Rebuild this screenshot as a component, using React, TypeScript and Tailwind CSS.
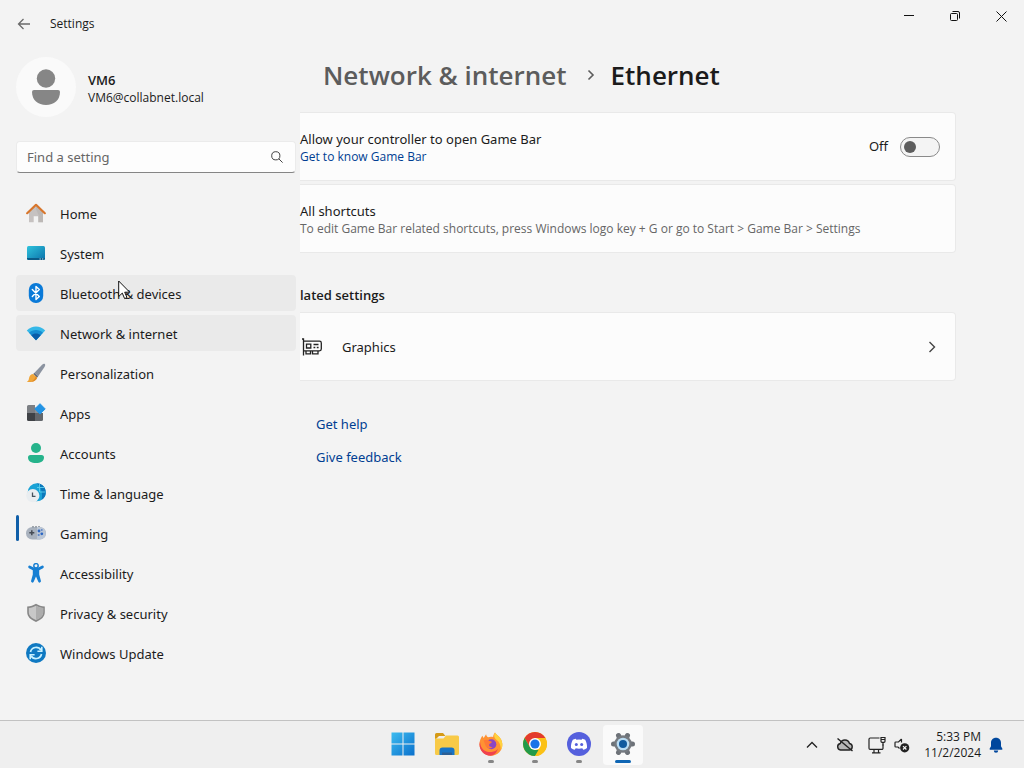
import React, { useState } from 'react';
import { clsx } from 'clsx';

interface NavItem {
  id: string;
  label: string;
  icon: React.ReactNode;
}

/* ── Sidebar icons ── */
const HomeIcon = () => (
  <svg viewBox="0 0 20 20" className="w-5 h-5">
    <path d="M3 9 10 2.5 17 9v10.2h-4.7v-6H7.7v6H3z" fill="#c6c2c1" />
    <path d="M13 13h-.7v6.2H17V9l-7-6.5V6z" fill="#b2adac" opacity=".5" />
    <path d="M1.2 10.2 10 1.8l8.8 8.4" fill="none" stroke="#d8762c" strokeWidth="2.2" strokeLinecap="round" strokeLinejoin="round" />
  </svg>
);

const SystemIcon = () => (
  <svg viewBox="0 0 20 20" className="w-5 h-5">
    <defs>
      <linearGradient id="sys" x1="0" y1="0" x2="1" y2="1">
        <stop offset="0" stopColor="#2fc3dc" />
        <stop offset="1" stopColor="#0b72ab" />
      </linearGradient>
    </defs>
    <rect x="1" y="3" width="18" height="14" rx="1.5" fill="url(#sys)" />
    <path d="M1 15h18v.6a1.4 1.4 0 0 1-1.4 1.4H2.4A1.4 1.4 0 0 1 1 15.6z" fill="#0b5b88" />
    <path d="M13.5 16h1.3M16 16h1.3" stroke="#d9f2fa" strokeWidth=".9" />
  </svg>
);

const BluetoothIcon = () => (
  <svg viewBox="0 0 20 20" className="w-5 h-5">
    <rect x="2.8" y="0" width="14.4" height="20" rx="7" fill="#0a7ad8" />
    <path d="m6.3 6.5 7 7-3.300 3.100V3.400l3.300 3.100-7 7" fill="none" stroke="#fff" strokeWidth="1.4" strokeLinejoin="round" strokeLinecap="round" />
  </svg>
);

const NetworkIcon = () => (
  <svg viewBox="0 0 20 20" className="w-5 h-5">
    <path d="M10 17.2.8 7.4C6 2.2 14 2.2 19.2 7.4z" fill="#35b8e8" />
    <path d="M10 17.2 3 9.8c3.900-3.700 10.100-3.700 14 0z" fill="#168cd2" />
    <path d="m10 17.200-4.700-4.900c2.700-2.400 6.700-2.400 9.400 0z" fill="#0a5ca8" />
  </svg>
);

const BrushIcon = () => (
  <svg viewBox="0 0 20 20" className="w-5 h-5">
    <path d="M18.8 1c.7.7.4 1.800-.3 2.900l-6.300 9.400-3.700-3.500 7.600-8C17 .9 18.100.4 18.800 1z" fill="#8b93a0" />
    <path d="m8.500 9.800 3.700 3.500-1.200 1.400L7.200 11z" fill="#6a6f79" />
    <path d="M7.200 11 11 14.700c-.6 3.100-4.800 4.700-10.200 4.200 2-.9 1.900-2.200 2.300-4.100C3.600 12.500 5.200 11 7.200 11z" fill="#f0a63a" />
    <path d="M1 18.900c4 .2 6-.9 7.300-2.700 1-1.400 1.200-2.400 1.100-3.300l1.600 1.800c-.6 3.100-4.800 4.700-10 4.200z" fill="#df8a26" />
  </svg>
);

const AppsIcon = () => (
  <svg viewBox="0 0 20 20" className="w-5 h-5">
    <path d="M1 3.5A1.5 1.5 0 0 1 2.5 2H9v8H1z" fill="#7c7f84" />
    <path d="M1 10h8v8H2.5A1.5 1.5 0 0 1 1 16.5z" fill="#3f4246" />
    <path d="M9 10h8v6.5a1.5 1.5 0 0 1-1.5 1.5H9z" fill="#63676c" />
    <path d="M9 4.5h5V10H9z" fill="#8d9196" />
    <path d="m14 .7 5.2 5.2-5.200 5.200-5.200-5.200z" fill="#2293e4" stroke="#2293e4" strokeLinejoin="round" />
  </svg>
);

const AccountsIcon = () => (
  <svg viewBox="0 0 20 20" className="w-5 h-5">
    <circle cx="10" cy="5" r="5" fill="#25b38b" />
    <path d="M4.5 12h11a2.500 2.500 0 0 1 2.500 2.500C18 18.300 14.500 20 10 20s-8-1.700-8-5.500A2.500 2.500 0 0 1 4.500 12z" fill="#25b38b" />
  </svg>
);

const TimeIcon = () => (
  <svg viewBox="0 0 20 20" className="w-5 h-5">
    <circle cx="10.7" cy="9.3" r="9" fill="#1aa3d6" />
    <path d="M10.7.3a9 9 0 0 1 4.7 16.700c1.500-4.300.8-12-4.700-16.700z" fill="#0c78bb" />
    <path d="M11 4.5h7.2M14 9h5.500M13.500 1v8" stroke="#5fd0ee" strokeWidth=".9" fill="none" />
    <circle cx="6.8" cy="12.7" r="6.6" fill="#e9edf0" />
    <path d="M6.5 9.5v3.800h3" stroke="#46525c" strokeWidth="1.3" fill="none" />
  </svg>
);

const GamingIcon = () => (
  <svg viewBox="0 0 20 20" className="w-5 h-5">
    <rect x="0" y="4" width="20" height="12.5" rx="6.25" fill="#a9b2be" />
    <path d="M6 3.800h2M9 3.800h2M12 3.800h2" stroke="#7b838e" strokeWidth="1" />
    <path d="M5.800 7.200v5M3.300 9.700h5" stroke="#454b54" strokeWidth="1.5" />
    <path d="M11 4h2.500a6.250 6.250 0 0 1 0 12.500H11z" fill="#bcc7d6" />
    <circle cx="13" cy="8" r="1.4" fill="#2b66c4" />
    <circle cx="15.8" cy="10.8" r="1.4" fill="#2b66c4" />
    <circle cx="12.7" cy="12" r="1.1" fill="#5c83c5" />
    <circle cx="15.8" cy="7" r=".9" fill="#5c83c5" />
  </svg>
);

const AccessibilityIcon = () => (
  <svg viewBox="0 0 20 20" className="w-5 h-5">
    <path d="M3.600 4 8 6.200h4L16.400 4" fill="none" stroke="#177fd3" strokeWidth="2.8" strokeLinecap="round" strokeLinejoin="round" />
    <path d="M6.800 6h6.400v5.500l1.700 6.300a1.400 1.400 0 0 1-2.700.8L10 13.500l-2.200 5.100a1.400 1.400 0 0 1-2.700-.8l1.700-6.300z" fill="#177fd3" />
    <circle cx="10" cy="2.8" r="2.2" fill="#f3f3f3" stroke="#177fd3" strokeWidth="1.5" />
  </svg>
);

const ShieldIcon = () => (
  <svg viewBox="0 0 20 20" className="w-5 h-5">
    <path d="M10 .8c2.500 1.700 5.500 2.500 8.800 2.700V9c0 4.700-3.200 7.700-8.800 9.900C4.400 16.700 1.200 13.700 1.200 9V3.500C4.500 3.300 7.500 2.500 10 .8z" fill="#878787" />
    <path d="M10 2.700c2.200 1.300 4.500 2 7.200 2.200v4.300c0 3.700-2.800 6-7.200 7.700-4.400-1.700-7.200-4-7.200-7.700V4.900C5.500 4.700 7.800 4 10 2.700z" fill="#c8c8c8" />
    <path d="M10 2.700c2.200 1.300 4.500 2 7.200 2.200v4.300c0 3.700-2.800 6-7.200 7.700z" fill="#adadad" />
  </svg>
);

const UpdateIcon = () => (
  <svg viewBox="0 0 20 20" className="w-5 h-5">
    <circle cx="10" cy="10" r="10" fill="#0f79c2" />
    <path d="M4.500 9A5.700 5.700 0 0 1 15 7.200M15.500 11A5.700 5.700 0 0 1 5 12.800" fill="none" stroke="#c8f1ff" strokeWidth="1.7" />
    <path d="M15.800 3.800v4.400h-4.400M4.200 16.200v-4.400h4.400" fill="none" stroke="#c8f1ff" strokeWidth="1.6" />
  </svg>
);

const navItems: NavItem[] = [
  { id: 'home', label: 'Home', icon: <HomeIcon /> },
  { id: 'system', label: 'System', icon: <SystemIcon /> },
  { id: 'bluetooth', label: 'Bluetooth & devices', icon: <BluetoothIcon /> },
  { id: 'network', label: 'Network & internet', icon: <NetworkIcon /> },
  { id: 'personalization', label: 'Personalization', icon: <BrushIcon /> },
  { id: 'apps', label: 'Apps', icon: <AppsIcon /> },
  { id: 'accounts', label: 'Accounts', icon: <AccountsIcon /> },
  { id: 'time', label: 'Time & language', icon: <TimeIcon /> },
  { id: 'gaming', label: 'Gaming', icon: <GamingIcon /> },
  { id: 'accessibility', label: 'Accessibility', icon: <AccessibilityIcon /> },
  { id: 'privacy', label: 'Privacy & security', icon: <ShieldIcon /> },
  { id: 'update', label: 'Windows Update', icon: <UpdateIcon /> },
];

/* ── Title bar ── */
const TitleBar: React.FC = () => (
  <header className="flex h-12 items-center justify-between">
    <div className="flex items-center gap-[18px] pl-4">
      <button aria-label="Back" className="flex h-8 w-4 items-center justify-center text-[#6b6b6b]">
        <svg viewBox="0 0 14 12" className="h-3 w-3.5" fill="none" stroke="currentColor" strokeWidth="1.3">
          <path d="M13 6H1.500M6.500 1l-5 5 5 5" />
        </svg>
      </button>
      <span className="font-['Open_Sans',sans-serif] text-xs">Settings</span>
    </div>
    <div className="flex self-start">
      <button aria-label="Minimize" className="flex h-8 w-[46px] items-center justify-center">
        <svg viewBox="0 0 10 10" className="h-2.5 w-2.5"><path d="M0 4.500h10" stroke="#111" /></svg>
      </button>
      <button aria-label="Restore" className="flex h-8 w-[46px] items-center justify-center">
        <svg viewBox="0 0 10 10" className="h-2.5 w-2.5" fill="none" stroke="#111">
          <rect x=".5" y="2.5" width="7" height="7" rx="1" />
          <path d="M2.500.5H8A1.500 1.500 0 0 1 9.500 2v5.500" />
        </svg>
      </button>
      <button aria-label="Close" className="flex h-8 w-[46px] items-center justify-center">
        <svg viewBox="0 0 11 11" className="h-[11px] w-[11px]"><path d="m.5.5 10 10m0-10-10 10" stroke="#111" /></svg>
      </button>
    </div>
  </header>
);

/* ── Sidebar ── */
const Sidebar: React.FC = () => {
  const [current, setCurrent] = useState('gaming');

  return (
    <aside className="w-[296px] shrink-0 pl-4 pt-[9px]">
      <div className="flex items-center gap-3">
        <div className="flex h-[60px] w-[60px] items-center justify-center rounded-full bg-[#fafafa]">
          <svg viewBox="0 0 28 36" className="h-9 w-7" fill="#868686">
            <circle cx="14" cy="9.5" r="9.2" />
            <path d="M2 21h24a2 2 0 0 1 2 2c0 8-6 13-14 13S0 31 0 23a2 2 0 0 1 2-2z" />
          </svg>
        </div>
        <div className="pt-1 font-['Open_Sans',sans-serif] leading-[18px]">
          <p className="text-[13px] font-semibold leading-[18px]">VM6</p>
          <p className="text-xs leading-[18px]">VM6@collabnet.local</p>
        </div>
      </div>

      <label className="mt-6 flex h-8 items-center rounded border border-b-[#858585] border-[#ebebeb] bg-[#fdfdfd] pl-2.5 pr-3">
        <input
          type="text"
          aria-label="Find a setting"
          placeholder="Find a setting"
          className="min-w-0 flex-1 bg-transparent pt-0.5 text-[13px] outline-none placeholder:text-[#666]"
        />
        <svg viewBox="0 0 12 12" className="h-3 w-3" fill="none" stroke="#444" strokeWidth="1">
          <circle cx="4.8" cy="4.8" r="4.1" />
          <path d="m7.800 7.800 3.800 3.800" />
        </svg>
      </label>

      <nav className="mt-[22px] flex flex-col gap-1">
        {navItems.map((item) => {
          const highlighted = item.id === 'bluetooth' || item.id === 'network';
          return (
            <button
              key={item.id}
              onClick={() => setCurrent(item.id)}
              className={clsx(
                'relative flex h-9 items-center gap-3.5 rounded pl-2.5 text-left text-[13px] hover:bg-[#eaeaea]',
                highlighted && 'bg-[#eaeaea]',
              )}
            >
              {/* Accent pill */}
              {current === item.id && (
                <span className="absolute left-0 top-0 h-[26px] w-[3px] rounded-full bg-[#0f5ea8]" />
              )}
              {item.icon}
              <span className="pt-1">{item.label}</span>
            </button>
          );
        })}
      </nav>
    </aside>
  );
};

/* ── Page content ── */
const Content: React.FC = () => {
  const [enabled, setEnabled] = useState(false);
  const card = 'flex h-[69px] items-center rounded-r border border-l-0 border-[#e9e9e9] bg-[#fcfcfc]';

  return (
    <main className="ml-1 min-w-0 flex-1 pr-[68px] pt-2">
      <h1 className="flex items-center pl-[23px] font-['Open_Sans',sans-serif] text-[26px] font-semibold leading-[38px]">
        <a href="#network" className="text-[#5c5c5c]">Network &amp; internet</a>
        <svg viewBox="0 0 8 12" className="ml-5 mr-4 h-3 w-2" fill="none" stroke="#5c5c5c" strokeWidth="1.6">
          <path d="m1.500 1.500 4.500 4.500-4.500 4.500" />
        </svg>
        <span>Ethernet</span>
      </h1>

      <div className="mt-[18px] flex flex-col gap-[3px]">
        <section className={clsx(card, 'justify-between pr-[15px]')}>
          <div className="pt-0.5">
            <p className="text-[13px] leading-[18px]">
              <label htmlFor="game-bar">Allow your controller to open Game Bar</label>
            </p>
            <a href="#game-bar" className="block font-['Open_Sans',sans-serif] text-xs leading-[18px] text-[#003e92]">
              Get to know Game Bar
            </a>
          </div>
          <div className="flex items-center gap-3">
            <span className="text-[13px]">{enabled ? 'On' : 'Off'}</span>
            <input
              id="game-bar"
              type="checkbox"
              role="switch"
              checked={enabled}
              onChange={(e) => setEnabled(e.target.checked)}
              className="flex h-5 w-10 appearance-none items-center rounded-full border border-[#8a8a8a] bg-[#f4f4f4] px-[3px] before:h-3 before:w-3 before:rounded-full before:bg-[#5d5d5d] checked:justify-end checked:bg-[#005fb8] checked:before:bg-white"
            />
          </div>
        </section>

        <section className={card}>
          <div className="pt-0.5">
            <p className="text-[13px] leading-[18px]">All shortcuts</p>
            <p className="font-['Open_Sans',sans-serif] text-xs leading-[18px] text-[#666]">
              To edit Game Bar related shortcuts, press Windows logo key + G or go to Start &gt; Game Bar &gt; Settings
            </p>
          </div>
        </section>
      </div>

      <h2 className="mt-8 font-['Open_Sans',sans-serif] text-[13px] font-semibold leading-5">lated settings</h2>
      <button className={clsx(card, 'mt-[7px] w-full pr-[15px] text-left')}>
        <svg viewBox="0 0 20 18" className="ml-0.5 h-[18px] w-5" fill="none" stroke="#222" strokeWidth="1.3">
          <path d="M0 1h1.500v16.500M1.500 3.200h16a1.800 1.800 0 0 1 1.800 1.800v6a1.800 1.800 0 0 1-1.800 1.800h-16" />
          <path d="M4.500 6.200h4.300v3.800H4.500zM11.500 6.500h5M11.500 9.500h1.800M14.800 9.500h1.800M4 13v2.800h4.500V13M10.500 13v2.800h5.500V13" />
        </svg>
        <span className="ml-5 flex-1 pt-0.5 text-[13px]">Graphics</span>
        <svg viewBox="0 0 8 12" className="mr-1 h-3 w-2" fill="none" stroke="#444" strokeWidth="1.4">
          <path d="m1.500 1 5 5-5 5" />
        </svg>
      </button>

      <div className="mt-[33px] flex flex-col items-start gap-[13px] pl-4 text-[13px] leading-5 text-[#003e92]">
        <a href="#help">Get help</a>
        <a href="#feedback">Give feedback</a>
      </div>
    </main>
  );
};

/* ── Taskbar icons ── */
const StartIcon = () => (
  <svg viewBox="0 0 24 24" className="h-6 w-6">
    <defs>
      <linearGradient id="win" x1="0" y1="0" x2="1" y2="1">
        <stop offset="0" stopColor="#3cbcf0" />
        <stop offset="1" stopColor="#0a70cc" />
      </linearGradient>
    </defs>
    <path d="M.5.5h11v11H.5zM12.500.5h11v11h-11zM.5 12.500h11v11H.5zM12.500 12.500h11v11h-11z" fill="url(#win)" />
  </svg>
);

const FolderIcon = () => (
  <svg viewBox="0 0 26 24" className="h-6 w-[26px]">
    <path d="M1 2.500A1.500 1.500 0 0 1 2.500 1H9l2.500 3H5L1 8z" fill="#d59a17" />
    <path d="M1 6.500h8.500l2.500-3h11.500A1.500 1.500 0 0 1 25 5v16.500a1.500 1.500 0 0 1-1.500 1.500h-21A1.500 1.500 0 0 1 1 21.500z" fill="#f8ca47" />
    <path d="M5.500 23v-4.500a3 3 0 0 1 3-3h9a3 3 0 0 1 3 3V23z" fill="#1874c5" />
    <path d="M8 20.500h10V23H8z" fill="#2c5f94" />
  </svg>
);

const FirefoxIcon = () => (
  <svg viewBox="0 0 24 24" className="h-6 w-6">
    <path d="M16 .5c1.200 2.600 6.800 4.500 7.300 11.300C23.800 18.700 18.600 23.700 12 23.700S.5 18.700.5 12.300C.5 9 1.600 6.200 3.300 3.700L4.700 6l2.400-3.700c.2 1.500.9 2.300 2 2.900 1.800-.7 3.500-.7 5-.2.3-2 .8-3.400 1.900-4.500z" fill="#ff9233" />
    <path d="M16 .5c1.200 2.600 6.800 4.500 7.300 11.300.2 2.500-.4 4.700-1.500 6.500.2-5-1.300-8.500-4.500-10.600C15 6.200 14.500 3 16 .5z" fill="#ffd23d" />
    <path d="M1 9.500C1.500 18 7 20.500 12.500 20c3-.3 5-1.500 6.300-3.200-1 4.200-4 6.900-7.300 6.900C5 23.700.5 18.500.5 12.300z" fill="#f0424f" />
    <circle cx="12.3" cy="12.3" r="5" fill="#8b45c4" />
    <path d="M4.500 8.500c2.300-1.200 4.300-.8 6 .5 1.800.1 2.500.6 2.300 1.300-.9 1.100-2.500 1.100-2.700 2.400-.2 1.600 1.400 2.600 3.500 2.200-2.200 2.200-6.500 1.400-7.300-1.900C5.600 11 5.300 10 4.500 8.500z" fill="#ff7a35" />
  </svg>
);

const ChromeIcon = () => (
  <svg viewBox="0 0 24 24" className="h-6 w-6">
    <circle cx="12" cy="12" r="12" fill="#fbc116" />
    <path d="M1.610 6A12 12 0 0 1 22.390 6H12L6.800 15z" fill="#e33b2e" />
    <path d="M1.610 6 6.800 15 12 18h5.200L12 24A12 12 0 0 1 1.610 6z" fill="#229a4a" />
    <path d="M22.390 6A12 12 0 0 1 12 24l5.200-9V6z" fill="#fbc116" />
    <circle cx="12" cy="12" r="6" fill="#fff" />
    <circle cx="12" cy="12" r="4.6" fill="#1a73e8" />
  </svg>
);

const DiscordIcon = () => (
  <svg viewBox="0 0 24 24" className="h-6 w-6">
    <circle cx="12" cy="12" r="12" fill="#5560dd" />
    <path d="M8.800 6.700c-1.300.2-2.300.6-3 1-1.400 2.500-2 5.300-1.800 8.300 1.300 1 2.600 1.500 3.800 1.700l.9-1.500c2.200.6 4.400.6 6.600 0l.9 1.500c1.200-.2 2.500-.7 3.800-1.700.2-3-.4-5.800-1.800-8.300-.7-.4-1.700-.8-3-1l-.6 1.100a12 12 0 0 0-5.200 0z" fill="#fff" />
    <circle cx="9.3" cy="12.6" r="1.5" fill="#5560dd" />
    <circle cx="14.7" cy="12.6" r="1.5" fill="#5560dd" />
  </svg>
);

const GearIcon = () => (
  <svg viewBox="0 0 24 24" className="h-6 w-6">
    <path
      d="M7.500 3.500 16.500 20.500M16.500 3.500 7.500 20.500M2.500 12h19"
      stroke="#6d7278"
      strokeWidth="5"
      strokeLinecap="round"
    />
    <circle cx="12" cy="12" r="8.7" fill="#757a80" />
    <circle cx="12" cy="12" r="6.3" fill="#b9dcf3" />
    <circle cx="12" cy="12" r="4" fill="#115a9e" />
  </svg>
);

interface TaskbarApp {
  label: string;
  icon: React.ReactNode;
  running?: boolean;
  active?: boolean;
}

const taskbarApps: TaskbarApp[] = [
  { label: 'Start', icon: <StartIcon /> },
  { label: 'File Explorer', icon: <FolderIcon /> },
  { label: 'Firefox', icon: <FirefoxIcon />, running: true },
  { label: 'Chrome', icon: <ChromeIcon />, running: true },
  { label: 'Discord', icon: <DiscordIcon />, running: true },
  { label: 'Settings', icon: <GearIcon />, active: true },
];

const Taskbar: React.FC = () => (
  <footer className="grid h-12 grid-cols-[1fr_auto_1fr] items-center border-t border-[#c2c2c2] bg-[#efefef]">
    <div />
    <div className="flex gap-1 pl-0.5">
      {taskbarApps.map((app) => (
        <button
          key={app.label}
          aria-label={app.label}
          className={clsx(
            'relative flex h-10 w-10 items-center justify-center rounded pb-0.5',
            app.active && 'bg-[#fafafa]',
          )}
        >
          {app.icon}
          {app.running && <span className="absolute bottom-0.5 h-[3px] w-1.5 rounded-full bg-[#868686]" />}
          {app.active && <span className="absolute bottom-0.5 h-[3px] w-4 rounded-full bg-[#0f66b4]" />}
        </button>
      ))}
    </div>

    {/* System tray */}
    <div className="flex items-center justify-end pr-[21px]">
      <button aria-label="Show hidden icons" className="mr-[18px]">
        <svg viewBox="0 0 12 8" className="h-2 w-3" fill="none" stroke="#222" strokeWidth="1.3">
          <path d="m1 6.500 5-5 5 5" />
        </svg>
      </button>
      <button aria-label="OneDrive" className="mr-[14px]">
        <svg viewBox="0 0 18 14" className="h-3.5 w-[18px]" fill="none" stroke="#222" strokeWidth="1.4">
          <path d="M4.500 12A3.300 3.300 0 0 1 4.300 5.500 4.800 4.800 0 0 1 13.500 5.500 3.300 3.300 0 0 1 13.500 12z" fill="#b5b5b5" />
          <path d="m1.500.5 15 12.500" />
        </svg>
      </button>
      <button aria-label="Network" className="mr-2">
        <svg viewBox="0 0 18 18" className="h-[18px] w-[18px]" fill="none" stroke="#222" strokeWidth="1.2">
          <path d="M11.500 2H2.200A1.200 1.200 0 0 0 1 3.200v9a1.200 1.200 0 0 0 1.200 1.200h11.600a1.200 1.200 0 0 0 1.200-1.200V8.500M6 13.500v3M10.500 13.500v3M4 16.800h8.500" />
          <path d="M13 1.500h4v3.800a1 1 0 0 1-1 1h-2a1 1 0 0 1-1-1zM13 3.500h4M15 6.500v3" />
        </svg>
      </button>
      <button aria-label="Volume muted" className="mr-3.5">
        <svg viewBox="0 0 16 16" className="h-4 w-4">
          <path d="M7.500 2 4.500 5H1.700A.7.7 0 0 0 1 5.700v3.600a.7.7 0 0 0 .7.7H4l1.500 1.500M7.500 2v3.500" fill="none" stroke="#222" strokeWidth="1.2" />
          <circle cx="10.7" cy="10.8" r="4.6" fill="#222" />
          <path d="m9 9.100 3.400 3.400m0-3.400L9 12.500" stroke="#f4f4f4" strokeWidth="1.2" />
        </svg>
      </button>
      <div className="text-right font-['Open_Sans',sans-serif] text-xs">
        <p>5:33 PM</p>
        <p>11/2/2024</p>
      </div>
      <button aria-label="Notifications" className="ml-2">
        <svg viewBox="0 0 14 16" className="h-4 w-3.5" fill="#00479d">
          <path d="M7 .8c3 0 5 2.200 5 5v3.400l1.400 2.600c.2.5 0 .9-.5.9H1.100c-.5 0-.7-.4-.5-.9L2 9.200V5.800c0-2.800 2-5 5-5zM4.800 13.500h4.400a2.200 2.200 0 0 1-4.400 0z" />
        </svg>
      </button>
    </div>
  </footer>
);

/* ── Mouse pointer, floats over the navigation list ── */
const Pointer: React.FC = () => (
  <svg viewBox="0 0 13 20" className="pointer-events-none absolute left-[118px] top-[280px] h-5 w-[13px]">
    <path d="M.7 1v15.500l3.600-3.400 2.300 5.500 2.400-1-2.300-5.400h5z" fill="#fff" stroke="#111" strokeWidth="1" />
  </svg>
);

export default function App() {
  return (
    <div className="relative flex min-h-screen flex-col bg-[#f3f3f3] font-['Noto_Sans','Open_Sans',sans-serif] text-[#1b1b1b]">
      <TitleBar />
      <div className="flex flex-1">
        <Sidebar />
        <Content />
      </div>
      <Taskbar />
      <Pointer />
    </div>
  );
}
